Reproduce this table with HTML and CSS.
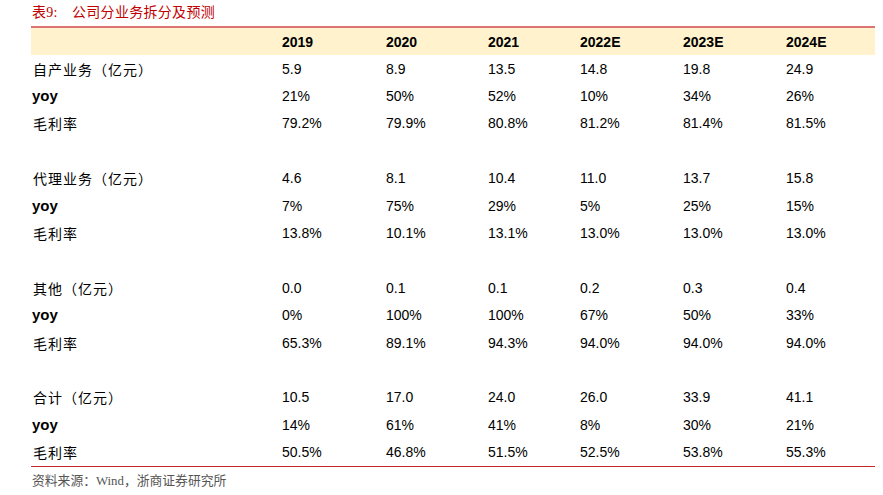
FILE: index.html
```html
<!DOCTYPE html>
<html lang="zh-CN">
<head>
<meta charset="utf-8">
<title>表9：公司分业务拆分及预测</title>
<link rel="stylesheet" href="styles.css">
</head>
<body>
<div class="page">
  <div class="title"><span class="title-num">表9:</span>公司分业务拆分及预测</div>
  <div class="table">
    <div class="row head">
      <div class="label"></div>
      <div>2019</div><div>2020</div><div>2021</div><div>2022E</div><div>2023E</div><div>2024E</div>
    </div>

    <div class="row"><div class="label">自产业务（亿元）</div><div>5.9</div><div>8.9</div><div>13.5</div><div>14.8</div><div>19.8</div><div>24.9</div></div>
    <div class="row"><div class="label yoy">yoy</div><div>21%</div><div>50%</div><div>52%</div><div>10%</div><div>34%</div><div>26%</div></div>
    <div class="row"><div class="label">毛利率</div><div>79.2%</div><div>79.9%</div><div>80.8%</div><div>81.2%</div><div>81.4%</div><div>81.5%</div></div>
    <div class="row blank"></div>

    <div class="row"><div class="label">代理业务（亿元）</div><div>4.6</div><div>8.1</div><div>10.4</div><div>11.0</div><div>13.7</div><div>15.8</div></div>
    <div class="row"><div class="label yoy">yoy</div><div>7%</div><div>75%</div><div>29%</div><div>5%</div><div>25%</div><div>15%</div></div>
    <div class="row"><div class="label">毛利率</div><div>13.8%</div><div>10.1%</div><div>13.1%</div><div>13.0%</div><div>13.0%</div><div>13.0%</div></div>
    <div class="row blank"></div>

    <div class="row"><div class="label">其他（亿元）</div><div>0.0</div><div>0.1</div><div>0.1</div><div>0.2</div><div>0.3</div><div>0.4</div></div>
    <div class="row"><div class="label yoy">yoy</div><div>0%</div><div>100%</div><div>100%</div><div>67%</div><div>50%</div><div>33%</div></div>
    <div class="row"><div class="label">毛利率</div><div>65.3%</div><div>89.1%</div><div>94.3%</div><div>94.0%</div><div>94.0%</div><div>94.0%</div></div>
    <div class="row blank"></div>

    <div class="row"><div class="label">合计（亿元）</div><div>10.5</div><div>17.0</div><div>24.0</div><div>26.0</div><div>33.9</div><div>41.1</div></div>
    <div class="row"><div class="label yoy">yoy</div><div>14%</div><div>61%</div><div>41%</div><div>8%</div><div>30%</div><div>21%</div></div>
    <div class="row last"><div class="label">毛利率</div><div>50.5%</div><div>46.8%</div><div>51.5%</div><div>52.5%</div><div>53.8%</div><div>55.3%</div></div>
  </div>
  <div class="source">资料来源：Wind，浙商证券研究所</div>
</div>
</body>
</html>
```
FILE: styles.css
```css
html, body {
  margin: 0;
  padding: 0;
  background: #ffffff;
}

.page {
  width: 844px;
  padding-left: 31px;
  font-family: "Liberation Sans", "Noto Sans CJK SC", sans-serif;
  color: #000000;
}

.title {
  height: 26px;
  box-sizing: border-box;
  padding-top: 4px;
  padding-left: 1px;
  font-family: "Liberation Serif", "Noto Sans CJK SC", serif;
  font-size: 14px;
  line-height: 18px;
  letter-spacing: 0.3px;
  color: #c00000;
}

.title-num {
  display: inline-block;
  width: 40px;
}

.table {
  border-top: 2px solid #dc7474;
  border-bottom: 1px solid #c8282c;
}

.row {
  display: grid;
  grid-template-columns: 251px 104px 102px 92px 103px 103px 89px;
  height: 27.4px;
  align-items: center;
  font-size: 14px;
  line-height: 16px;
}

.row.head {
  height: 27px;
  background: #fff2cc;
  font-weight: bold;
}

.label {
  padding-left: 2px;
  font-family: "Noto Sans CJK SC", "Liberation Sans", sans-serif;
  font-size: 14px;
  letter-spacing: 1px;
}

.label.yoy {
  padding-left: 1px;
  font-family: "Liberation Sans", sans-serif;
  font-weight: bold;
  font-size: 15px;
  letter-spacing: 0;
}

.source {
  padding-top: 6px;
  padding-left: 1px;
  font-family: "Liberation Serif", "Noto Sans CJK SC", serif;
  font-size: 12.8px;
  line-height: 16px;
  color: #555555;
}
```
